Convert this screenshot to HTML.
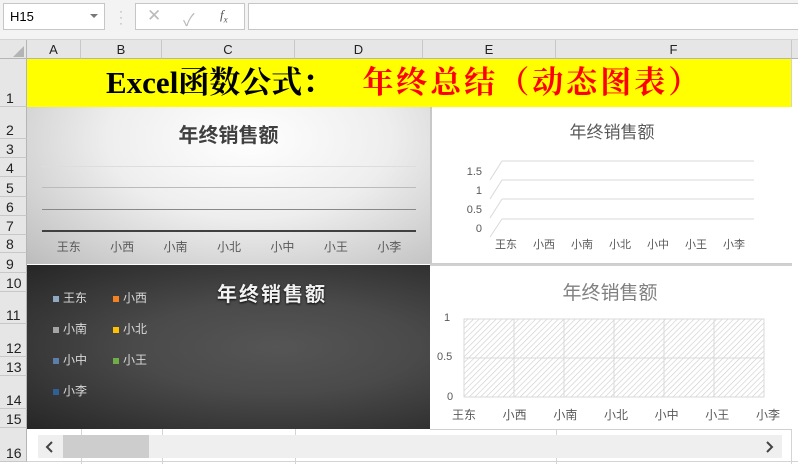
<!DOCTYPE html><html><head><meta charset="utf-8"><style>
*{margin:0;padding:0;box-sizing:border-box}
body{width:798px;height:464px;overflow:hidden;background:#fff;font-family:"Liberation Sans","Noto Sans CJK SC",sans-serif;position:relative}
.a{position:absolute}
.rh{position:absolute;left:0;width:27px;background:#e6e6e6;border-bottom:1px solid #c8c8c8;border-right:1px solid #b5b5b5;font-size:14px;color:#222;padding-left:6px;display:flex;align-items:flex-end;line-height:16px}
.ch{position:absolute;top:40px;height:19px;background:#e6e6e6;border-right:1px solid #c8c8c8;border-bottom:1px solid #b5b5b5;font-size:13px;text-align:center;line-height:19px;color:#222}
.cj{font-family:"Liberation Sans","Noto Sans CJK SC",sans-serif}
</style></head><body>
<div class="a" style="left:0;top:0;width:798px;height:40px;background:#f3f3f3;border-bottom:1px solid #d4d4d4"></div>
<div class="a" style="left:3px;top:3px;width:102px;height:27px;background:#fff;border:1px solid #c6c6c6;font-size:13px;line-height:25px;padding-left:6px">H15</div>
<div class="a" style="left:90px;top:14px;width:0;height:0;border-left:4px solid transparent;border-right:4px solid transparent;border-top:4px solid #777"></div>
<div class="a" style="left:119px;top:8px;color:#aaa;font-size:12px;line-height:6px">·<br>·<br>·</div>
<div class="a" style="left:135px;top:3px;width:110px;height:27px;background:#fff;border:1px solid #c6c6c6"></div>
<div class="a" style="left:147px;top:6px;color:#bbb;font-size:17px">✕</div>
<div class="a" style="left:183px;top:6px;color:#bbb;font-size:17px">✓</div>
<div class="a" style="left:220px;top:7px;color:#555;font-size:13px;font-style:italic;font-family:'Liberation Serif',serif">f<sub style="font-size:9px">x</sub></div>
<div class="a" style="left:248px;top:3px;width:552px;height:27px;background:#fff;border:1px solid #c6c6c6"></div>
<div class="a" style="left:0;top:40px;width:27px;height:19px;background:#e6e6e6;border-right:1px solid #b5b5b5;border-bottom:1px solid #b5b5b5"></div>
<div class="a" style="left:13px;top:46px;width:0;height:0;border-left:11px solid transparent;border-bottom:11px solid #b4b4b4"></div>
<div class="ch" style="left:27px;width:54px">A</div>
<div class="ch" style="left:81px;width:81px">B</div>
<div class="ch" style="left:162px;width:133px">C</div>
<div class="ch" style="left:295px;width:128px">D</div>
<div class="ch" style="left:423px;width:133px">E</div>
<div class="ch" style="left:556px;width:236px">F</div>
<div class="ch" style="left:792px;width:10px"></div>
<div class="rh" style="top:59px;height:48px">1</div>
<div class="rh" style="top:107px;height:32px">2</div>
<div class="rh" style="top:139px;height:19px">3</div>
<div class="rh" style="top:158px;height:19px">4</div>
<div class="rh" style="top:177px;height:20px">5</div>
<div class="rh" style="top:197px;height:19px">6</div>
<div class="rh" style="top:216px;height:19px">7</div>
<div class="rh" style="top:235px;height:18px">8</div>
<div class="rh" style="top:253px;height:20px">9</div>
<div class="rh" style="top:273px;height:19px">10</div>
<div class="rh" style="top:292px;height:32px">11</div>
<div class="rh" style="top:324px;height:33px">12</div>
<div class="rh" style="top:357px;height:19px">13</div>
<div class="rh" style="top:376px;height:33px">14</div>
<div class="rh" style="top:409px;height:19px">15</div>
<div class="rh" style="top:428px;height:34px">16</div>
<div class="a" style="left:27px;top:461px;width:771px;height:1px;background:#d4d4d4"></div>
<div class="a" style="left:81px;top:428px;width:1px;height:36px;background:#d4d4d4"></div>
<div class="a" style="left:162px;top:428px;width:1px;height:36px;background:#d4d4d4"></div>
<div class="a" style="left:295px;top:428px;width:1px;height:36px;background:#d4d4d4"></div>
<div class="a" style="left:556px;top:428px;width:1px;height:36px;background:#d4d4d4"></div>
<div class="a" style="left:791px;top:59px;width:1px;height:405px;background:#d4d4d4"></div>
<div class="a" style="left:27px;top:59px;width:764px;height:48px;background:#ff0;font-family:'Liberation Serif','Noto Serif CJK SC',serif;font-weight:bold;font-size:31px;line-height:48px;padding-left:79px;white-space:nowrap"><span style="color:#000">Excel函数公式：</span><span style="color:#f00;margin-left:29px;letter-spacing:3px">年终总结（动态图表）</span></div>
<!-- chart1 -->
<div class="a" style="left:27px;top:107px;width:403px;height:157px;background:radial-gradient(ellipse at 55% 20%,#fff 0%,#eee 45%,#bcbcbc 100%)">
<div class="a cj" style="left:0;width:403px;top:12px;text-align:center;font-size:20px;font-weight:bold;color:#404040">年终销售额</div>
<div class="a" style="left:15px;top:59px;width:374px;height:1px;background:#ddd"></div>
<div class="a" style="left:15px;top:80px;width:374px;height:1px;background:#bbb"></div>
<div class="a" style="left:15px;top:102px;width:374px;height:1px;background:#888"></div>
<div class="a" style="left:15px;top:123px;width:374px;height:2px;background:#404040"></div>
<div class="a cj" style="left:15px;top:131px;width:374px;display:flex;justify-content:space-around;font-size:12px;color:#595959"><span>王东</span><span>小西</span><span>小南</span><span>小北</span><span>小中</span><span>小王</span><span>小李</span></div>
</div>
<!-- chart2 -->
<div class="a" style="left:430px;top:107px;width:362px;height:157px;background:#fff;border-left:2px solid #c8c8c8;border-bottom:1px solid #ccc">
<div class="a cj" style="left:0;width:360px;top:11px;text-align:center;font-size:17px;color:#595959">年终销售额</div>
<svg class="a" style="left:0;top:0" width="360" height="157"><g stroke="#d9d9d9" stroke-width="1" fill="none">
<path d="M70 54H322M58 73L70 54"/><path d="M70 73H322M58 92L70 73"/><path d="M70 92H322M58 111L70 92"/><path d="M70 112H322M58 130L70 112"/></g></svg>
<div class="a" style="left:0;width:50px;text-align:right;top:56px;font-size:11px;line-height:19px;color:#595959">1.5<br>1<br>0.5<br>0</div>
<div class="a cj" style="left:63px;top:129px;width:250px;display:flex;justify-content:space-between;font-size:11px;color:#595959"><span>王东</span><span>小西</span><span>小南</span><span>小北</span><span>小中</span><span>小王</span><span>小李</span></div>
</div>
<!-- chart3 -->
<div class="a" style="left:27px;top:265px;width:403px;height:164px;background:radial-gradient(ellipse at 62% 50%,#555 0%,#4a4a4a 40%,#262626 100%)">
<div class="a cj" style="left:190px;top:13px;font-size:20px;font-weight:bold;color:#f2f2f2;text-shadow:0 1px 2px #000;letter-spacing:2px">年终销售额</div>
<div class="a cj" style="left:26px;top:18px;font-size:12px;color:#d9d9d9;line-height:31px">
<div><span style="display:inline-block;width:6px;height:6px;background:#8ea9c1;margin-right:4px"></span>王东</div>
<div><span style="display:inline-block;width:6px;height:6px;background:#a5a5a5;margin-right:4px"></span>小南</div>
<div><span style="display:inline-block;width:6px;height:6px;background:#5b7fa8;margin-right:4px"></span>小中</div>
<div><span style="display:inline-block;width:6px;height:6px;background:#2e5f95;margin-right:4px"></span>小李</div></div>
<div class="a cj" style="left:86px;top:18px;font-size:12px;color:#d9d9d9;line-height:31px">
<div><span style="display:inline-block;width:6px;height:6px;background:#f58220;margin-right:4px"></span>小西</div>
<div><span style="display:inline-block;width:6px;height:6px;background:#ffc000;margin-right:4px"></span>小北</div>
<div><span style="display:inline-block;width:6px;height:6px;background:#70ad47;margin-right:4px"></span>小王</div></div>
</div>
<!-- chart4 -->
<div class="a" style="left:430px;top:264px;width:362px;height:166px;background:#fff;border-top:2px solid #d0d0d0;border-bottom:1px solid #d0d0d0">
<div class="a cj" style="left:0;top:12px;text-align:center;font-size:19px;color:#808080;padding-left:30px;width:330px">年终销售额</div>
<svg class="a" style="left:0;top:0" width="362" height="166"><defs><pattern id="h" width="4" height="4" patternUnits="userSpaceOnUse" patternTransform="rotate(45)"><rect width="4" height="4" fill="#fff"/><line x1="0" y1="0" x2="0" y2="4" stroke="#ccc" stroke-width="1.2"/></pattern></defs>
<rect x="34" y="53" width="300" height="78" fill="url(#h)" stroke="#d9d9d9"/>
<g stroke="#d9d9d9"><path d="M34 92H334M84 53V131M134 53V131M184 53V131M234 53V131M284 53V131"/></g></svg>
<div class="a" style="left:14px;top:46px;font-size:11px;color:#595959">1</div>
<div class="a" style="left:7px;top:85px;font-size:11px;color:#595959">0.5</div>
<div class="a" style="left:17px;top:125px;font-size:11px;color:#595959">0</div>
<div class="a cj" style="left:22px;top:140px;width:328px;display:flex;justify-content:space-between;font-size:12px;color:#595959"><span>王东</span><span>小西</span><span>小南</span><span>小北</span><span>小中</span><span>小王</span><span>小李</span></div>
</div>
<div class="a" style="left:38px;top:435px;width:744px;height:23px;background:#efefef"></div>
<div class="a" style="left:63px;top:435px;width:86px;height:23px;background:#cdcdcd"></div>
<svg class="a" style="left:45px;top:441px" width="10" height="12"><path d="M7 1L2 6L7 11" stroke="#444" stroke-width="2" fill="none"/></svg>
<svg class="a" style="left:765px;top:441px" width="10" height="12"><path d="M2 1L7 6L2 11" stroke="#444" stroke-width="2" fill="none"/></svg>
</body></html>
